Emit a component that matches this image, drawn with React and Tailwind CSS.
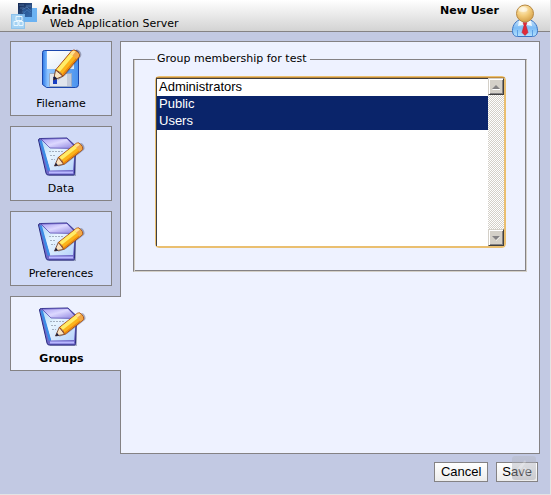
import React from "react";

function Logo() {
  return (
    <svg className="h-8 w-7 shrink-0" viewBox="0 0 28 32" aria-hidden="true">
      <defs>
        <linearGradient id="logoDark" x1="0" y1="0" x2="1" y2="1">
          <stop offset="0" stopColor="#14264f" />
          <stop offset="1" stopColor="#3a6dab" />
        </linearGradient>
      </defs>
      <rect x="10" y="8" width="17" height="14" fill="#6bb2f2" />
      <rect x="8" y="3" width="14" height="14" fill="url(#logoDark)" />
      <path d="M9 5h5M16 6h5M10 8h4M12 10l5-3 4 4M13 14l4-4 4 3M12 12h3" fill="none" stroke="#6d9cd0" strokeWidth="1" opacity=".5" />
      <rect x="13" y="9" width="9" height="8" fill="#2b66ad" opacity=".5" />
      <rect x="1.500" y="14.500" width="13" height="14" fill="#a4d2f3" stroke="#8fc3ec" />
      <rect x="10" y="14" width="5" height="8" fill="#4c91d9" opacity=".4" />
      <path d="M6 16.500h6v4H6zM4 21.500h4v4H4zM9 21.500h4v4H9z" fill="none" stroke="#e8f6ff" strokeWidth="1" />
    </svg>
  );
}

function UserIcon() {
  return (
    <svg className="h-9 w-7" viewBox="0 0 28 36" aria-hidden="true">
      <defs>
        <radialGradient id="head" cx=".4" cy=".25" r=".8">
          <stop offset="0" stopColor="#fff3d0" />
          <stop offset=".5" stopColor="#f2ca78" />
          <stop offset="1" stopColor="#d09a44" />
        </radialGradient>
        <linearGradient id="torso" x1="0" y1="0" x2="0" y2="1">
          <stop offset="0" stopColor="#c9e4fb" />
          <stop offset=".5" stopColor="#7dbcf6" />
          <stop offset="1" stopColor="#b5e2ff" />
        </linearGradient>
      </defs>
      <path d="M1.500 26.500c0-6 4-10 8-11h8c5 1 9 5 9 11 0 4-2 6-5 6h-15c-3 0-5-2-5-6z" fill="url(#torso)" stroke="#3a74c4" />
      <path d="M6.500 26v6M21.500 26v6" stroke="#5c9fe4" strokeWidth="1" />
      <path d="M8 17l-1 5 5-1 2 2 2-2 5 1-1-5-2-2h-8z" fill="#eef8ff" />
      <path d="M12 18.500h4l-1 3 2 7-3 3-3-3 2-7z" fill="#e02a38" stroke="#b01828" strokeWidth=".5" />
      <circle cx="14" cy="9.500" r="8.500" fill="url(#head)" stroke="#b88a44" />
      <ellipse cx="12" cy="5.500" rx="4.500" ry="2.500" fill="#fff" opacity=".5" />
    </svg>
  );
}

function Pencil({ transform }) {
  return (
    <g transform={transform}>
      <path d="M2 3l9 3h24c4 0 5-6 3-8z" fill="#2b2840" opacity=".35" />
      <path d="M0 0L9-4.800V4.800z" fill="#f9e4c2" stroke="#6b3418" strokeWidth=".8" />
      <path d="M9-4.800H34q3 0 3 4.800t-3 4.800H9q2-4.800 0-9.600z" fill="#fbb31a" stroke="#a04818" strokeWidth=".9" />
      <path d="M10-4.300H34V-.5H10.500z" fill="#ffec68" />
      <path d="M10 3H34V4.300H9.600z" fill="#ea8410" />
      <path d="M31-4.300h2.500q3 0 3 4.300t-3 4.300H31z" fill="#f3a848" />
      <path d="M31-4.300h2.500q2 0 2.500 3H31z" fill="#ffe090" />
      <path d="M0 0L3.500-1.900V1.900z" fill="#141c40" />
    </g>
  );
}

function DiskIcon() {
  return (
    <svg className="h-12 w-12" viewBox="0 0 48 48" aria-hidden="true">
      <defs>
        <linearGradient id="disk" x1="0" y1="0" x2="1" y2="0">
          <stop offset="0" stopColor="#2b79e8" />
          <stop offset=".15" stopColor="#8fc5ff" />
          <stop offset="1" stopColor="#4a92ee" />
        </linearGradient>
        <linearGradient id="diskLabel" x1="0" y1="0" x2="1" y2="1">
          <stop offset="0" stopColor="#fff" />
          <stop offset="1" stopColor="#dce8f7" />
        </linearGradient>
      </defs>
      <path d="M7.500 4.500h31q3 0 3 3v31q0 3-3 3h-29l-4-3v-32q0-2 2-2z" fill="url(#disk)" stroke="#1c47ac" />
      <path d="M10 5h27v18H10z" fill="url(#diskLabel)" />
      <path d="M12.500 27.500h22v13h-22z" fill="#e0e5ed" stroke="#99acc8" />
      <path d="M30 28h4v12h-4z" fill="#c3cad8" />
      <path d="M16 31h4v7h-4z" fill="#183fc3" />
      <Pencil transform="translate(16.500 34) rotate(-50)" />
    </svg>
  );
}

function NotepadIcon() {
  return (
    <svg className="h-12 w-12" viewBox="0 0 48 48" aria-hidden="true">
      <defs>
        <linearGradient id="page" x1="0" y1="0" x2="1" y2="1">
          <stop offset="0" stopColor="#a9d4f5" />
          <stop offset=".4" stopColor="#e8f5ff" />
          <stop offset="1" stopColor="#b5d2fa" />
        </linearGradient>
        <linearGradient id="flap" x1="0" y1="0" x2="1" y2="1">
          <stop offset="0" stopColor="#a79cf0" />
          <stop offset=".45" stopColor="#dcd8ff" />
          <stop offset="1" stopColor="#8b80de" />
        </linearGradient>
      </defs>
      <path d="M5 12l7 33h27V18z" fill="#1b2049" opacity=".3" />
      <path d="M1.500 9q0-1.500 2-1.500l26.500-.5 8.500 8-1 27.500q0 1.500-1 1.500H11q-1.500 0-2-2z" fill="#7068c8" stroke="#282a80" />
      <path d="M4 9l9 7 25 1-2 22-23 .5z" fill="url(#page)" />
      <path d="M3.500 9.500l8.500 30" stroke="#3c8de6" strokeWidth="2.500" />
      <path d="M4 8l26-.5 8 8.500v1.500L13 17z" fill="url(#flap)" stroke="#5a4fb4" strokeWidth=".8" />
      <path d="M12 41.500h24" stroke="#b9b8ff" strokeWidth="2" />
      <path d="M12 20.500h15M13 24.500h6M14 28.500h4" stroke="#a3b0c0" strokeDasharray="2 1" />
      <Pencil transform="translate(17.500 35) rotate(-38) scale(.92)" />
    </svg>
  );
}

const tabs = [
  { name: "Filename", Icon: DiskIcon },
  { name: "Data", Icon: NotepadIcon },
  { name: "Preferences", Icon: NotepadIcon },
  { name: "Groups", Icon: NotepadIcon, active: true },
];

function Tab({ name, Icon, active }) {
  const look = active
    ? "z-10 w-[111px] border-r-0 bg-[#eef2ff] pr-[9px] font-bold"
    : "w-[102px] bg-[#d1dbf7]";
  return (
    <button
      type="button"
      role="tab"
      aria-selected={!!active}
      className={`relative flex h-[75px] flex-col items-center border border-[#848284] pt-1 text-[11px] leading-4 ${look}`}
    >
      <Icon />
      <span className="pt-0.5">{name}</span>
    </button>
  );
}

function ScrollButton({ label, points, light }) {
  return (
    <button
      type="button"
      aria-label={label}
      className="flex h-[17px] w-4 items-center justify-center border border-t-[#d4d0c8] border-r-[#404040] border-b-[#404040] border-l-[#d4d0c8] bg-[#d4d0c8] shadow-[inset_1px_1px_0_#fff,inset_-1px_-1px_0_#848284]"
    >
      <svg className="h-2 w-2" viewBox="0 0 8 8" aria-hidden="true">
        <path d={light} fill="#fff" />
        <path d={points} fill="#848284" />
      </svg>
    </button>
  );
}

function GroupList() {
  return (
    <div className="rounded-sm border border-[#eabf70]">
      <div className="flex h-[170px] border-t border-r border-b border-t-[#c08c3c] border-r-[#eabf70] border-b-[#eabf70] bg-white">
        <select
          id="groups"
          multiple
          defaultValue={["public", "users"]}
          className="min-w-0 flex-1 appearance-none overflow-hidden border-t border-l border-[#404040] bg-white p-0 font-[Liberation_Sans,Arial,sans-serif] text-[13px] text-black outline-none [&>option]:h-[17px] [&>option]:min-h-0 [&>option]:px-0.5 [&>option]:py-0 [&>option]:leading-[17px] [&>option:checked]:bg-linear-to-r [&>option:checked]:from-[#0a246a] [&>option:checked]:to-[#0a246a] [&>option:checked]:[-webkit-text-fill-color:#fff]"
        >
          <option value="administrators">Administrators</option>
          <option value="public">Public</option>
          <option value="users">Users</option>
        </select>
        <div className="flex flex-col justify-between bg-[repeating-conic-gradient(#d4d0c8_0_25%,#fff_0_50%)] bg-[length:2px_2px]">
          <ScrollButton label="Scroll up" points="M4 2L8 6H0z" light="M0 6h8v1H1z" />
          <ScrollButton label="Scroll down" points="M0 2h8L4 6z" light="M8 2v1L4 7V6z" />
        </div>
      </div>
    </div>
  );
}

function FormButton({ pad, children }) {
  return (
    <button
      type="button"
      className={`h-5 border border-[#848284] bg-linear-to-b from-white to-[#ececec] font-[Liberation_Sans,Arial,sans-serif] text-[13px] leading-4 text-black ${pad}`}
    >
      {children}
    </button>
  );
}

function Badge() {
  return (
    <svg className="pointer-events-none absolute -top-1.5 right-0.5 h-6 w-6" viewBox="0 0 24 24" aria-hidden="true">
      <defs>
        <linearGradient id="badge" x1="0" y1="0" x2="0" y2="1">
          <stop offset="0" stopColor="#b5b8c2" />
          <stop offset="1" stopColor="#a0a2ac" />
        </linearGradient>
      </defs>
      <rect width="24" height="24" rx="3" fill="url(#badge)" opacity=".45" />
      <path d="M5 13l8-9 1 2-6 9zM9 17l3-6 3 2 5-1-8 9z" fill="#fff" opacity=".25" />
    </svg>
  );
}

export default function App() {
  return (
    <div className="flex min-h-screen flex-col border-r border-b border-[#e4e4e4] bg-[#c2c9e3] font-[Verdana,DejaVu_Sans,sans-serif] text-[11px] text-black">
      <header className="flex h-8 items-start border-b border-[#848284] bg-linear-to-b from-white to-[#d3d3d3] pr-[11px] pl-2.5">
        <Logo />
        <div className="flex-1 pt-[3px] pl-1">
          <h1 className="text-[12px] leading-[14px] font-bold">Ariadne</h1>
          <p className="pl-2 leading-[13px]">Web Application Server</p>
        </div>
        <span className="pt-1 pr-3 leading-[14px] font-bold">New User</span>
        <div className="relative pt-1">
          <UserIcon />
        </div>
      </header>

      <main className="flex flex-1 px-2.5 pt-[9px]">
        <div role="tablist" aria-orientation="vertical" className="flex w-[110px] shrink-0 flex-col gap-2.5">
          {tabs.map((tab) => (
            <Tab key={tab.name} {...tab} />
          ))}
        </div>
        <section className="min-w-0 flex-1 border border-[#848284] bg-[#eef2ff] px-3 pt-2">
          <fieldset className="border border-t-[#848284] border-r-[#d4d0c8] border-b-[#d4d0c8] border-l-[#848284] pr-5 pb-[23px] pl-[21px] shadow-[inset_1px_0_0_#d4d0c8,inset_-1px_-1px_0_#848284]">
            <legend className="pr-1 pl-0.5 leading-[18px]">
              <label htmlFor="groups">Group membership for test</label>
            </legend>
            <div className="pt-2">
              <GroupList />
            </div>
          </fieldset>
        </section>
      </main>

      <footer className="flex justify-end gap-2 px-3 pt-2 pb-3">
        <FormButton pad="px-1.5">Cancel</FormButton>
        <div className="relative flex">
          <FormButton pad="px-[5px]">Save</FormButton>
          <Badge />
        </div>
      </footer>
    </div>
  );
}
